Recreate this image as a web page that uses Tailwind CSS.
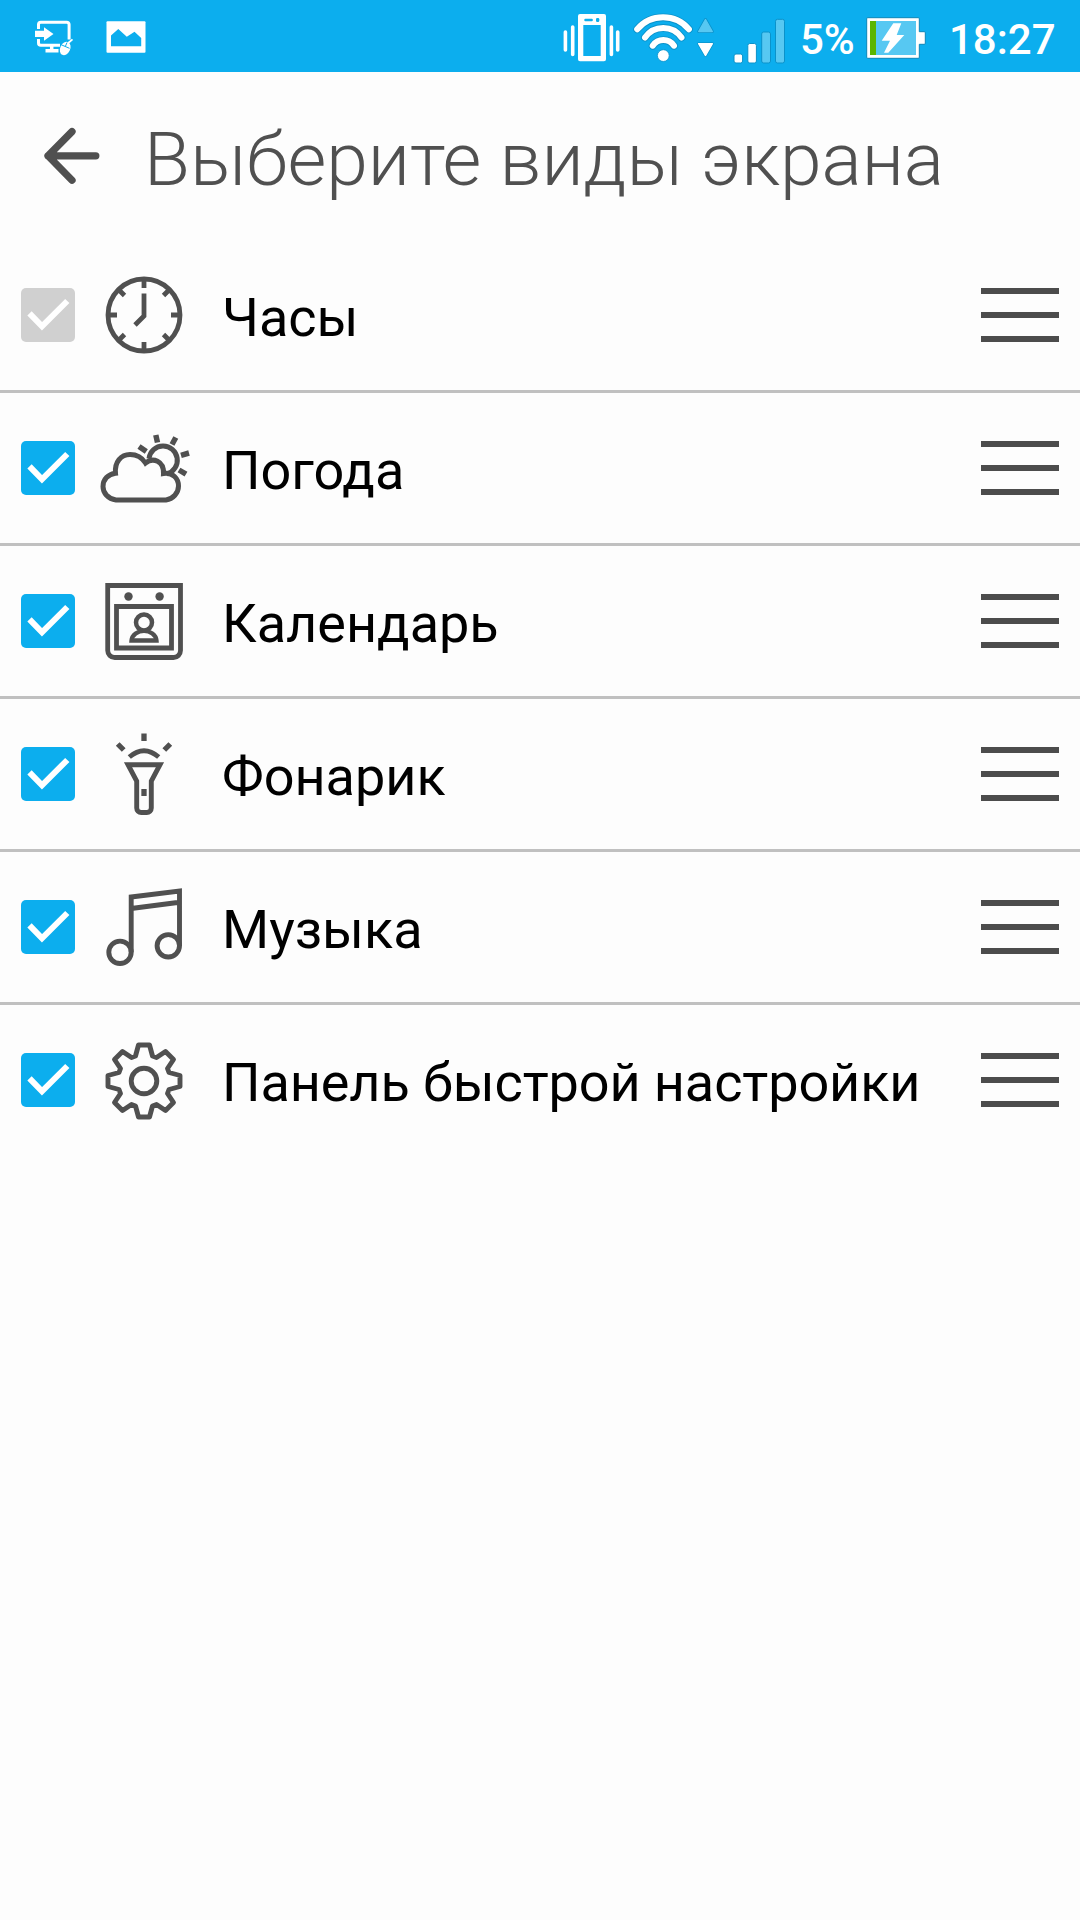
<!DOCTYPE html>
<html lang="ru">
<head>
<meta charset="utf-8">
<title>Выберите виды экрана</title>
<script src="https://cdn.jsdelivr.net/npm/@tailwindcss/browser@4"></script>
</head>
<body class="bg-[#fdfdfd] font-['Roboto',sans-serif] text-black">
<svg class="hidden">
  <symbol id="check" viewBox="0 0 54 54"><path d="M8.5 25.3 21 38.3 46.3 13" fill="none" stroke="#fff" stroke-width="6"/></symbol>
</svg>
<div class="flex h-[1920px] w-[1080px] flex-col overflow-hidden">
  <header class="flex h-[72px] shrink-0 items-center bg-[#0caeee] pl-[30px] text-[42px] font-medium text-white">
    <svg class="h-[72px] w-[50px]" viewBox="30 0 50 72" fill="none" stroke="#fff" stroke-width="3">
      <path d="M38.500 29v-4.500a2.300 2.300 0 0 1 2.300-2.300h26a2.300 2.300 0 0 1 2.300 2.300v15M38.500 39v4a2.300 2.300 0 0 0 2.300 2.300H60"/>
      <path d="M35 30.800h9v-3.500L53.500 34 44 40.700v-3.700h-9z" fill="#fff" stroke="none"/>
      <path d="M51.700 45v5M45.500 50.800h13" stroke-width="3.500"/>
      <ellipse cx="65.200" cy="48.500" rx="5" ry="7" transform="rotate(25 65.200 48.500)" fill="#fff" stroke="none"/>
      <path d="M67.500 43.500 70 41.500 72.500 39.300" stroke-width="1.700"/>
      <path d="M61.300 44.800 69.500 48.300M67 42.500 65.300 46.500" stroke="#0caeee" stroke-width="1"/>
    </svg>
    <svg class="ml-[20px] h-[72px] w-[50px]" viewBox="100 0 50 72">
      <rect x="106.500" y="21.300" width="39" height="31.400" rx="1" fill="#fff"/>
      <path d="M111 46.300V35.500L118.300 29 126.800 36.700 134.500 31.700 141.200 38v8.300z" fill="#0caeee"/>
    </svg>
    <svg class="ml-[410px] h-[72px] w-[64px]" viewBox="560 0 64 72" fill="#fff">
      <path fill-rule="evenodd" d="M580 14h24a2 2 0 0 1 2 2v43.300a2 2 0 0 1-2 2h-24a2 2 0 0 1-2-2V16a2 2 0 0 1 2-2zM583.300 25v31h17.400V25z"/>
      <rect x="584.300" y="18.800" width="8.500" height="2.400" rx="1" fill="#0caeee"/><rect x="596" y="18" width="3.300" height="4" rx="1.300" fill="#0caeee"/>
      <path d="M565.400 32v18M572.700 27v27.500M611.400 27v27.500M617.700 32v18" stroke="#fff" stroke-width="3.600" stroke-linecap="round"/>
    </svg>
    <svg class="h-[72px] w-[96px]" viewBox="624 0 96 72">
      <path d="M652.700 45.700A12.900 12.900 0 0 1 674 45.700M645 37.500A22.200 22.200 0 0 1 681.500 37.500M637.200 29.200A34 34 0 0 1 688.900 29.200" fill="none" stroke="#0b92ca" stroke-width="7.800" stroke-linecap="round"/>
      <path d="M652.700 45.700A12.900 12.900 0 0 1 674 45.700M645 37.500A22.200 22.200 0 0 1 681.500 37.500M637.200 29.200A34 34 0 0 1 688.900 29.200" fill="none" stroke="#fff" stroke-width="6" stroke-linecap="round"/>
      <circle cx="663.300" cy="55.600" r="5.900" fill="#fff" stroke="#0b92ca" stroke-width=".8"/>
      <path d="M698.700 31.500h13.600L705.500 19.500z" fill="#57c8f2" stroke="#0b92ca" stroke-width="3" stroke-linejoin="round"/>
      <path d="M698.700 31.500h13.600L705.500 19.500z" fill="#57c8f2" stroke="#57c8f2" stroke-width="1.400" stroke-linejoin="round"/>
      <path d="M698.700 43.700h13.600L705.500 55.300z" fill="#fff" stroke="#0b92ca" stroke-width="3" stroke-linejoin="round"/>
      <path d="M698.700 43.700h13.600L705.500 55.300z" fill="#fff" stroke="#fff" stroke-width="1.600" stroke-linejoin="round"/>
    </svg>
    <svg class="h-[72px] w-[80px]" viewBox="720 0 80 72" fill="#fff" stroke="#0b92ca">
      <rect x="734" y="54" width="8.600" height="9" rx="2"/>
      <rect x="747.800" y="43.500" width="8.600" height="19.500" rx="2"/>
      <g fill="#57c8f2"><rect x="761.700" y="32" width="8.800" height="31" rx="2"/><rect x="775.500" y="19.300" width="9" height="43.700" rx="2"/></g>
    </svg>
    <span class="mt-[6px] w-[62px]">5%</span>
    <svg class="h-[72px] w-[70px]" viewBox="862 0 70 72">
      <path d="M867.700 17.700h50.600a1 1 0 0 1 1 1v13h5a1 1 0 0 1 1 1v10.600a1 1 0 0 1-1 1h-5v13a1 1 0 0 1-1 1h-50.600a1 1 0 0 1-1-1V18.700a1 1 0 0 1 1-1z" fill="#fff" stroke="#0a85b8"/>
      <path d="M870 21h46v34h-46z" fill="#57c8f2"/>
      <path d="M870 21h6v34h-6z" fill="#5bb500"/>
      <path d="M893.300 23.300h8L896.700 35h7.600L888.300 52.700H884L890 40.700h-8.300z" fill="#fff"/>
    </svg>
    <span class="mt-[6px] ml-[17px]">18:27</span>
  </header>

  <div class="flex h-[168px] shrink-0 items-center pl-[36px]">
    <svg class="h-[72px] w-[72px]" viewBox="36 120 72 72" fill="none" stroke="#505050" stroke-width="7.300" stroke-linecap="round" stroke-linejoin="round"><path d="M95.800 155.800H48M72 131.700 48 155.800 72 180.200"/></svg>
    <h1 class="mt-[6px] ml-[36px] text-[75px] leading-none font-light tracking-[-0.05px] whitespace-nowrap text-[#505050]">Выберите виды экрана</h1>
  </div>

  <main class="flex flex-col divide-y-3 divide-[#c0c0c0] text-[54px]">
    <div class="flex h-[153px] items-center px-[21px]">
      <div class="size-[54px] rounded-[5px] bg-[#d0d0d0]"><svg class="size-[54px]"><use href="#check"/></svg></div>
      <svg class="ml-[24px] size-[90px]" viewBox="-45 -45 90 90" fill="none" stroke="#505050" stroke-width="4.800">
        <circle r="36"/><path d="M0-36v9M0 36v-9M-36 0h9M36 0h-9M-25-25l5.500 5.500M25-25l-5.500 5.500M-25 25l5.500-5.500M25 25l-5.500-5.500"/><path d="M0-21.500V1L-9 10"/>
      </svg>
      <span class="mt-[4px] ml-[33px] grow">Часы</span>
      <div class="flex w-[78px] flex-col gap-[18px]"><i class="h-[6px] bg-[#4c4c4c]"></i><i class="h-[6px] bg-[#4c4c4c]"></i><i class="h-[6px] bg-[#4c4c4c]"></i></div>
    </div>
    <div class="flex h-[153px] items-center px-[21px]">
      <div class="size-[54px] rounded-[5px] bg-[#0caeee]"><svg class="size-[54px]"><use href="#check"/></svg></div>
      <svg class="ml-[24px] size-[90px] overflow-visible" viewBox="-45 -45 90 90" fill="none" stroke="#505050" stroke-width="5">
        <path d="M-28 32C-36 31-41 25-41 18.500C-41 11.500-36 6-28.500 5.200C-29.500-6-23-13.500-14-13.500C-7-13.500-2-10.500 1.500-5C9-11 20-7 19.500 5.500C29 4 34.500 11 34.500 18C34.500 25 29 31 22 32Z"/>
        <path d="M5-9.500A14.200 14.200 0 1 1 23 5.800"/>
        <path d="M11.800-33 13.500-25.500M31.800-30.500 28-23.500M45-15 37-12.700M35 2 42 6.200M-5-21.500 2.300-16.500" stroke-width="5.500"/>
      </svg>
      <span class="mt-[4px] ml-[33px] grow">Погода</span>
      <div class="flex w-[78px] flex-col gap-[18px]"><i class="h-[6px] bg-[#4c4c4c]"></i><i class="h-[6px] bg-[#4c4c4c]"></i><i class="h-[6px] bg-[#4c4c4c]"></i></div>
    </div>
    <div class="flex h-[153px] items-center px-[21px]">
      <div class="size-[54px] rounded-[5px] bg-[#0caeee]"><svg class="size-[54px]"><use href="#check"/></svg></div>
      <svg class="ml-[24px] size-[90px]" viewBox="-45 -45 90 90" fill="none" stroke="#505050" stroke-width="4.800">
        <path d="M-36.300-35.500H36.500V29.500a7 7 0 0 1-7 7H-29.300a7 7 0 0 1-7-7z"/>
        <path d="M-27.500-14.500H27.500V27H-27.500z"/>
        <circle cx="-15.500" cy="-24.500" r="4.200" fill="#505050" stroke="none"/><circle cx="15.600" cy="-24.500" r="4.200" fill="#505050" stroke="none"/>
        <circle cy="1.500" r="8" stroke-width="4.500"/><path d="M-12.500 19.500C-12 13.500-6 9.800 0 9.800S12 13.500 12.500 19.500z" stroke-width="4.300"/>
      </svg>
      <span class="mt-[4px] ml-[33px] grow">Календарь</span>
      <div class="flex w-[78px] flex-col gap-[18px]"><i class="h-[6px] bg-[#4c4c4c]"></i><i class="h-[6px] bg-[#4c4c4c]"></i><i class="h-[6px] bg-[#4c4c4c]"></i></div>
    </div>
    <div class="flex h-[153px] items-center px-[21px]">
      <div class="size-[54px] rounded-[5px] bg-[#0caeee]"><svg class="size-[54px]"><use href="#check"/></svg></div>
      <svg class="ml-[24px] size-[90px]" viewBox="-45 -45 90 90" fill="none" stroke="#505050" stroke-width="4.900">
        <path d="M0-40.500v7.500M-26.300-30l6 6M26.300-30l-6 6M0 15v7" stroke-width="5.300"/>
        <path d="M-14.700-17Q0-29.500 14.700-17"/>
        <path d="M-16-9.300H16L7.300 7V34a4.500 4.500 0 0 1-4.500 4.500H-2.800A4.500 4.500 0 0 1-7.300 34V7z"/>
      </svg>
      <span class="mt-[4px] ml-[33px] grow">Фонарик</span>
      <div class="flex w-[78px] flex-col gap-[18px]"><i class="h-[6px] bg-[#4c4c4c]"></i><i class="h-[6px] bg-[#4c4c4c]"></i><i class="h-[6px] bg-[#4c4c4c]"></i></div>
    </div>
    <div class="flex h-[153px] items-center px-[21px]">
      <div class="size-[54px] rounded-[5px] bg-[#0caeee]"><svg class="size-[54px]"><use href="#check"/></svg></div>
      <svg class="ml-[24px] size-[90px]" viewBox="-45 -45 90 90" fill="none" stroke="#505050" stroke-width="4.900">
        <path d="M-12.800 25.300V-30L35.500-36V19M-12.800-18.500 35.500-24.700"/><circle cx="-24" cy="25.300" r="11.200"/><circle cx="24.300" cy="18.800" r="11.200"/>
      </svg>
      <span class="mt-[4px] ml-[33px] grow">Музыка</span>
      <div class="flex w-[78px] flex-col gap-[18px]"><i class="h-[6px] bg-[#4c4c4c]"></i><i class="h-[6px] bg-[#4c4c4c]"></i><i class="h-[6px] bg-[#4c4c4c]"></i></div>
    </div>
    <div class="flex h-[150px] items-center px-[21px]">
      <div class="size-[54px] rounded-[5px] bg-[#0caeee]"><svg class="size-[54px]"><use href="#check"/></svg></div>
      <svg class="ml-[24px] size-[90px]" viewBox="-45 -46 90 90" fill="none" stroke="#505050" stroke-width="4.900" stroke-linejoin="round">
        <circle r="12.800"/>
        <path d="M-5.500-36H5.500L8.500-25 12.500-23.500 21.500-29.500 29.500-21.500 23.500-12.500 25-8.500 36-5.500V5.500L25 8.500 23.500 12.500 29.500 21.500 21.500 29.500 12.500 23.500 8.500 25 5.500 36H-5.500L-8.500 25-12.500 23.500-21.500 29.500-29.500 21.500-23.500 12.500-25 8.500-36 5.500V-5.500L-25-8.500-23.500-12.500-29.500-21.500-21.500-29.500-12.500-23.500-8.500-25Z"/>
      </svg>
      <span class="mt-[4px] ml-[33px] grow tracking-[-0.1px] whitespace-nowrap">Панель быстрой настройки</span>
      <div class="flex w-[78px] flex-col gap-[18px]"><i class="h-[6px] bg-[#4c4c4c]"></i><i class="h-[6px] bg-[#4c4c4c]"></i><i class="h-[6px] bg-[#4c4c4c]"></i></div>
    </div>
  </main>
</div>
</body>
</html>
